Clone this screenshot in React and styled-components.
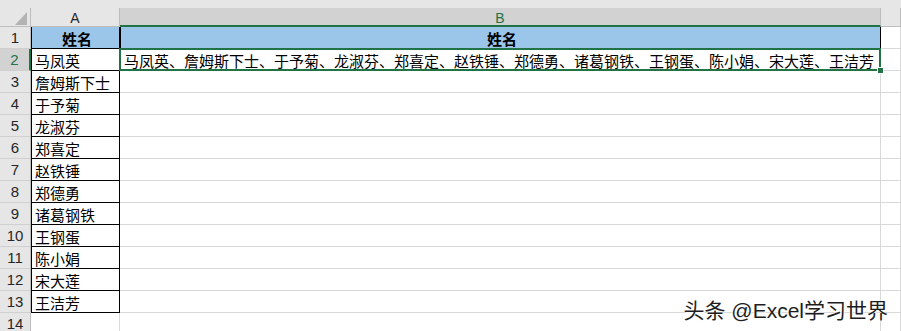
import React from 'react';
import styled, { createGlobalStyle, css } from 'styled-components';

const GlobalStyle = createGlobalStyle`
  html, body {
    margin: 0;
    padding: 0;
    background: #ffffff;
    overflow: hidden;
  }
  body {
    font-family: "Noto Sans CJK SC", "Noto Sans", sans-serif;
  }
`;

const GREEN = '#217346';
const GRID = '#d9d9d9';
const HEAD_BG = '#e6e6e6';
const HEAD_SEL = '#d2d2d2';
const HEAD_LINE = '#bdbdbd';

const Page = styled.div`
  position: relative;
  width: 901px;
  height: 331px;
  overflow: hidden;
  background: #ffffff;
`;

const TopStrip = styled.div`
  height: 8px;
  background: ${HEAD_BG};
`;

const Sheet = styled.div`
  display: grid;
  grid-template-columns: 31px 89px 761px 1fr;
  grid-auto-rows: 22px;
  grid-template-rows: 19px;
`;

const Corner = styled.div`
  box-sizing: border-box;
  display: flex;
  justify-content: flex-end;
  align-items: flex-end;
  padding: 0 3px 1px 0;
  background: ${HEAD_BG};
  border-right: 1px solid ${HEAD_LINE};
  border-bottom: 1px solid ${HEAD_LINE};
`;

const ColHead = styled.div`
  box-sizing: border-box;
  display: flex;
  justify-content: center;
  align-items: center;
  background: ${HEAD_BG};
  border-right: 1px solid ${HEAD_LINE};
  border-bottom: 1px solid ${HEAD_LINE};
  font-family: "Liberation Sans", "Noto Sans", sans-serif;
  font-size: 14px;
  color: #262626;
  padding-top: 1px;
  ${(p) =>
    p.$active &&
    css`
      background: ${HEAD_SEL};
      color: ${GREEN};
      border-bottom: 2px solid ${GREEN};
      padding-top: 2px;
    `}
`;

const RowHead = styled.div`
  box-sizing: border-box;
  display: flex;
  justify-content: center;
  align-items: center;
  background: ${HEAD_BG};
  border-right: 1px solid ${HEAD_LINE};
  border-bottom: 1px solid #d0d0d0;
  font-family: "Liberation Sans", "Noto Sans", sans-serif;
  font-size: 15px;
  color: #262626;
  ${(p) =>
    p.$active &&
    css`
      background: ${HEAD_SEL};
      color: ${GREEN};
      border-right: 2px solid ${GREEN};
    `}
`;

const Cell = styled.div`
  box-sizing: border-box;
  position: relative;
  display: flex;
  align-items: center;
  justify-content: ${(p) => (p.$center ? 'center' : 'flex-start')};
  padding: 1px 0 0 4px;
  border-right: 1px solid ${GRID};
  border-bottom: 1px solid ${GRID};
  font-size: 15px;
  font-weight: ${(p) => (p.$bold ? 700 : 400)};
  color: #000000;
  white-space: nowrap;
  background: ${(p) => (p.$fill ? '#9bc5e9' : '#ffffff')};
  ${(p) =>
    p.$boxed &&
    css`
      border-right-color: #000000;
      border-bottom-color: #000000;
      box-shadow: inset 1px 0 0 #000000;
    `}
  ${(p) =>
    p.$selected &&
    css`
      z-index: 2;
      &::after {
        content: '';
        position: absolute;
        left: -1px;
        top: -1px;
        right: -1px;
        bottom: -1px;
        border: 2px solid ${GREEN};
        pointer-events: none;
      }
    `}
`;

const FillHandle = styled.span`
  position: absolute;
  right: -4px;
  bottom: -4px;
  width: 5px;
  height: 5px;
  background: ${GREEN};
  border: 1px solid #ffffff;
  z-index: 3;
`;

const Watermark = styled.div`
  position: absolute;
  right: 13px;
  bottom: 8px;
  font-family: "Liberation Sans", "Noto Sans CJK SC", sans-serif;
  font-size: 21px;
  line-height: 24px;
  color: #1e1e1e;
  text-shadow: 1px 1px 1px rgba(255, 255, 255, 0.95), -1px 0 1px rgba(255, 255, 255, 0.6);
`;

const names = [
  '马凤英',
  '詹姆斯下士',
  '于予菊',
  '龙淑芬',
  '郑喜定',
  '赵铁锤',
  '郑德勇',
  '诸葛钢铁',
  '王钢蛋',
  '陈小娟',
  '宋大莲',
  '王洁芳',
];

function CornerMark() {
  return (
    <svg width="12" height="13" viewBox="0 0 12 13">
      <polygon points="12,0 12,13 0,13" fill="#b3b3b3" />
    </svg>
  );
}

export default function App() {
  const rows = [];
  for (let r = 1; r <= 14; r++) rows.push(r);

  return (
    <Page>
      <GlobalStyle />
      <TopStrip />
      <Sheet>
        <Corner>
          <CornerMark />
        </Corner>
        <ColHead>A</ColHead>
        <ColHead $active>B</ColHead>
        <ColHead />
        {rows.map((r) => {
          let a = null;
          let b = null;
          if (r === 1) {
            a = (
              <Cell $boxed $fill $bold $center>
                姓名
              </Cell>
            );
            b = (
              <Cell $boxed $fill $bold $center>
                姓名
              </Cell>
            );
          } else if (r <= 13) {
            a = <Cell $boxed>{names[r - 2]}</Cell>;
            b =
              r === 2 ? (
                <Cell $selected>
                  {names.join('、')}
                  <FillHandle />
                </Cell>
              ) : (
                <Cell />
              );
          } else {
            a = <Cell />;
            b = <Cell />;
          }
          return (
            <React.Fragment key={r}>
              <RowHead $active={r === 2}>{r}</RowHead>
              {a}
              {b}
              <Cell />
            </React.Fragment>
          );
        })}
      </Sheet>
      <Watermark>头条 @Excel学习世界</Watermark>
    </Page>
  );
}
